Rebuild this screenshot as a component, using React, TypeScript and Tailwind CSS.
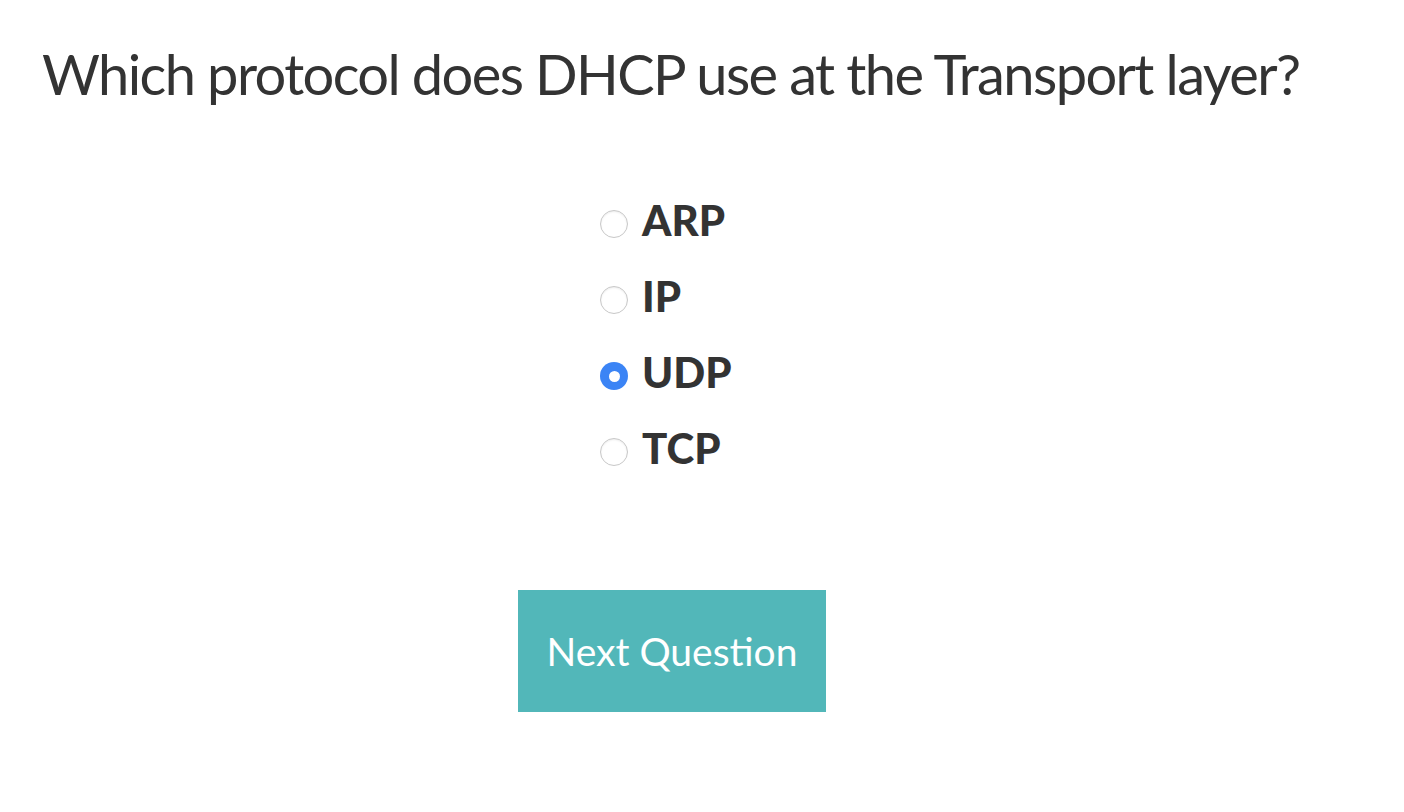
import React from "react";

const options = ["ARP", "IP", "UDP", "TCP"];

export default function App() {
  return (
    <div className="w-[1404px] h-[812px] bg-white text-[#333333]" style={{ fontFamily: "Lato, 'Open Sans', sans-serif" }}>
      <h1 className="pl-[42px] pt-[40px] text-[56px] leading-[68px] font-normal tracking-[-1.6px]">
        Which protocol does DHCP use at the Transport layer?
      </h1>
      <div className="pl-[600px] pt-[93px] flex flex-col gap-[38px]">
        {options.map((o) => (
          <label key={o} className="flex items-center h-[38px]">
            {o === "UDP" ? (
              <span className="w-[28px] h-[28px] rounded-full bg-[#3b84f5] flex items-center justify-center mt-[8px]">
                <span className="w-[11px] h-[11px] rounded-full bg-white" />
              </span>
            ) : (
              <span className="w-[28px] h-[28px] rounded-full border border-[#c8c8c8] bg-white shadow-[inset_0_1px_2px_rgba(0,0,0,0.08)] mt-[8px]" />
            )}
            <span className="ml-[14px] text-[42px] font-black leading-none">{o}</span>
          </label>
        ))}
      </div>
      <div className="pl-[518px] pt-[123px]">
        <button className="w-[308px] h-[122px] bg-[#52b7b9] text-white text-[39px] font-normal">
          Next Question
        </button>
      </div>
    </div>
  );
}
